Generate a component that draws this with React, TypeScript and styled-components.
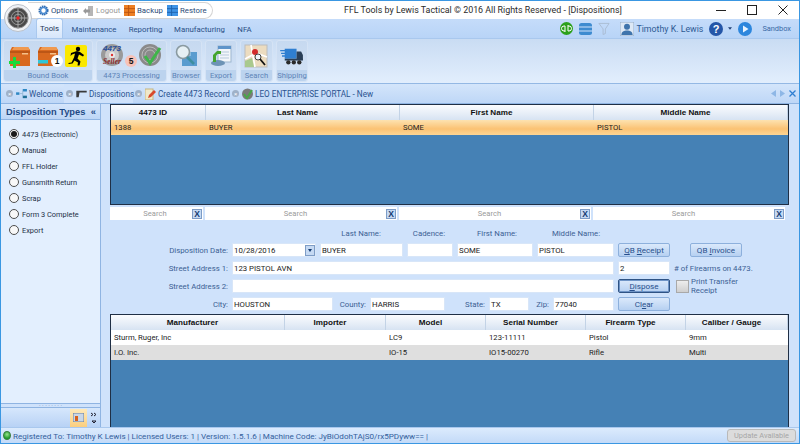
import React from "react";
import styled, { createGlobalStyle } from "styled-components";

const Global = createGlobalStyle`
  html, body { margin: 0; padding: 0; background: #cfe2fb; }
  * { box-sizing: border-box; }
  svg { flex: none; display: block; }
`;

const Win = styled.div`
  position: relative;
  width: 800px;
  height: 444px;
  overflow: hidden;
  display: flex;
  flex-direction: column;
  font-family: Roboto, "Liberation Sans", Arial, sans-serif;
  font-size: 7.8px;
  color: #15283f;
  background: #cfe2fb;
  border: 1px solid #3a97e2;
`;

const TitleBar = styled.div`
  height: 18px;
  flex: none;
  background: #fff;
  display: flex;
  align-items: center;
  padding-left: 27px;
`;
const Quick = styled.div`
  height: 17px;
  width: 185px;
  margin-top: 1px;
  flex: none;
  border: 1px solid #d4d4d4;
  border-left: none;
  border-radius: 0 9px 9px 0;
  display: flex;
  align-items: center;
  padding-left: 10px;
`;
const QuickItem = styled.span<{ $off?: boolean; $w: number }>`
  display: inline-flex;
  align-items: center;
  gap: 2px;
  width: ${(p) => p.$w}px;
  flex: none;
  font-size: 7.8px;
  white-space: nowrap;
  color: ${(p) => (p.$off ? "#9a9a9a" : "#2c4a78")};
`;
const Title = styled.div`
  margin-left: 131px;
  font-size: 8.9px;
  color: #2b2b2b;
  white-space: nowrap;
`;
const WinBtns = styled.div`
  margin-left: auto;
  display: flex;
  align-items: center;
  gap: 21px;
  padding-right: 11px;
`;
const LogoWrap = styled.div`
  position: absolute;
  left: 3px;
  top: 3px;
  z-index: 5;
`;

const Tabs = styled.div`
  height: 20px;
  flex: none;
  background: linear-gradient(#c5dcfa, #b8d4f7);
  display: flex;
  align-items: flex-end;
  padding-left: 35px;
  border-bottom: 1px solid #a9c8ee;
`;
const Tab = styled.div<{ $on?: boolean; $w: number }>`
  width: ${(p) => p.$w}px;
  height: ${(p) => (p.$on ? "20px" : "18px")};
  margin-right: 5px;
  display: flex;
  align-items: center;
  justify-content: center;
  font-size: 7.8px;
  color: ${(p) => (p.$on ? "#1d3554" : "#2a4f86")};
  background: ${(p) => (p.$on ? "linear-gradient(#f4f9ff, #d6e6fb)" : "none")};
  border: ${(p) => (p.$on ? "1px solid #a9c8ee" : "none")};
  border-bottom: none;
  border-radius: 3px 3px 0 0;
`;
const TabRight = styled.div`
  margin-left: auto;
  height: 19px;
  display: flex;
  align-items: center;
  padding-right: 8px;
  color: #2a4f86;
`;
const Spacer = styled.span<{ $w: number }>`
  width: ${(p) => p.$w}px;
  flex: none;
`;
const UserName = styled.span`
  font-size: 8.8px;
  color: #2f5a94;
  margin: 0 6px 0 2px;
  white-space: nowrap;
`;
const Sandbox = styled.span`
  margin-left: 10px;
  font-size: 7.4px;
  color: #3a6aa5;
`;

const Ribbon = styled.div`
  height: 45px;
  flex: none;
  background: linear-gradient(#c9dcf3, #e2eefd);
  border-bottom: 1px solid #94b8e4;
  padding: 1px 0 1px 2px;
  display: flex;
`;
const Group = styled.div<{ $w: number; $gap: number }>`
  width: ${(p) => p.$w}px;
  margin-right: ${(p) => p.$gap}px;
  height: 42px;
  border-radius: 3px;
  border: 1px solid #d5e3f5;
  background: linear-gradient(#c6d9f0, #d4e3f6);
  display: flex;
  flex-direction: column;
`;
const GroupIcons = styled.div<{ $pl: number }>`
  flex: 1;
  display: flex;
  align-items: center;
  padding-left: ${(p) => p.$pl}px;
`;
const GroupLabel = styled.div`
  height: 11px;
  line-height: 11px;
  text-align: center;
  font-size: 7.6px;
  color: #5d84b8;
  white-space: nowrap;
  background: #bcd3ee;
  border-radius: 0 0 3px 3px;
`;
const IconSlot = styled.div`
  position: relative;
  width: 24px;
  height: 24px;
  flex: none;
`;
const Badge = styled.span<{ $red?: boolean }>`
  position: absolute;
  right: ${(p) => (p.$red ? "-13px" : "-3px")};
  bottom: 1px;
  width: 12px;
  height: 12px;
  border-radius: 50%;
  font: bold 8.5px/12px "Liberation Sans", sans-serif;
  text-align: center;
  color: #111;
  background: ${(p) => (p.$red ? "#f7c2b8" : "#fff")};
`;

const DocTabs = styled.div`
  height: 20px;
  flex: none;
  background: linear-gradient(#d4e5fb, #bed7f7);
  border-bottom: 1px solid #8fb4e2;
  display: flex;
  align-items: center;
  padding-left: 5px;
`;
const DocTab = styled.div<{ $w: number; $on?: boolean; $pl: number }>`
  width: ${(p) => p.$w}px;
  height: 19px;
  flex: none;
  display: flex;
  align-items: center;
  gap: 2px;
  padding-left: ${(p) => p.$pl}px;
  color: #2a5390;
  font-size: 8.2px;
  white-space: nowrap;
  background: ${(p) => (p.$on ? "#cfe2fb" : "none")};
`;
const DocArrows = styled.div`
  margin-left: auto;
  display: flex;
  align-items: center;
  gap: 4px;
  padding-right: 3px;
`;
const Close = styled.span`
  width: 7px;
  height: 7px;
  margin-right: 1px;
  border-radius: 50%;
  background: #9fb1c8;
  color: #fff;
  font-size: 6px;
  line-height: 7px;
  text-align: center;
  flex: none;
`;

const Main = styled.div`
  flex: 1;
  display: flex;
  min-height: 0;
  overflow: hidden;
`;
const Side = styled.div`
  width: 100px;
  flex: none;
  display: flex;
  flex-direction: column;
  border-right: 1px solid #8fb4e2;
  background: #e3effe;
`;
const SideHead = styled.div`
  height: 16px;
  flex: none;
  background: linear-gradient(#d6e6fb, #bdd6f6);
  border-bottom: 1px solid #8fb4e2;
  display: flex;
  align-items: center;
  justify-content: space-between;
  padding: 0 4px 0 5px;
  font-family: "Liberation Sans", sans-serif;
  font-size: 9.3px;
  font-weight: bold;
  color: #1f4a85;
  white-space: nowrap;
`;
const RadioList = styled.div`
  flex: 1;
  display: flex;
  flex-direction: column;
  gap: 4px;
  padding: 8px 0 0 8px;
`;
const RadioRow = styled.div`
  height: 12px;
  display: flex;
  align-items: center;
  gap: 3px;
  color: #1d2f46;
  font-size: 7.4px;
  white-space: nowrap;
`;
const Radio = styled.span<{ $on?: boolean }>`
  width: 10px;
  height: 10px;
  border-radius: 50%;
  border: 1px solid #4d4d4d;
  background: #f8f8f8;
  display: flex;
  align-items: center;
  justify-content: center;
  &::after {
    content: "";
    width: 6px;
    height: 6px;
    border-radius: 50%;
    background: ${(p) => (p.$on ? "#1a1a1a" : "transparent")};
  }
`;
const Grip = styled.div`
  height: 5px;
  flex: none;
  border-top: 1px solid #8fb4e2;
  border-bottom: 1px solid #8fb4e2;
  background: #cfe2fb;
  color: #5a7ba8;
  font-size: 6px;
  line-height: 2px;
  text-align: center;
`;
const SideFoot = styled.div`
  height: 19px;
  flex: none;
  background: linear-gradient(#d6e7fc, #b8d2f5);
  display: flex;
  align-items: center;
  justify-content: flex-end;
  padding-right: 3px;
  gap: 4px;
`;
const FootBtn = styled.div`
  width: 17px;
  height: 18px;
  background: linear-gradient(#fde9ba, #fbcf7f);
  display: flex;
  align-items: center;
  justify-content: center;
`;

const Content = styled.div`
  flex: 1;
  padding: 0 10px 0 9px;
  display: flex;
  flex-direction: column;
  min-width: 0;
`;
const Grid = styled.div<{ $h: number; $open?: boolean }>`
  height: ${(p) => p.$h}px;
  flex: none;
  background: #4581b5;
  border: 1px solid #1f2f45;
  border-bottom-width: ${(p) => (p.$open ? 0 : 1)}px;
  width: 679px;
`;
const HeadRow = styled.div<{ $cols: string }>`
  display: grid;
  grid-template-columns: ${(p) => p.$cols};
  height: 15px;
  background: linear-gradient(#fbfcfe, #d7e3f2);
`;
const HeadCell = styled.div`
  text-align: center;
  padding-right: 10px;
  font-family: "Liberation Sans", sans-serif;
  font-weight: bold;
  font-size: 8.1px;
  line-height: 15px;
  color: #111;
  border-right: 1px solid #c3d3e6;
`;
const Row = styled.div<{ $cols: string; $bg: string }>`
  display: grid;
  grid-template-columns: ${(p) => p.$cols};
  height: 15px;
  background: ${(p) => p.$bg};
`;
const Cell = styled.div`
  font-size: 7.7px;
  line-height: 15px;
  padding-left: 3px;
  color: #222;
  white-space: nowrap;
  overflow: hidden;
`;
const SearchRow = styled.div`
  display: grid;
  grid-template-columns: 93px 192px 192px 192px;
  gap: 2px;
  height: 15px;
  width: 679px;
  margin-top: 2px;
  flex: none;
`;
const SearchCell = styled.div<{ $pr: number }>`
  background: #fff;
  display: flex;
  align-items: center;
  position: relative;
  padding-right: ${(p) => p.$pr}px;
  height: 13px;
`;
const SearchText = styled.span`
  flex: 1;
  text-align: center;
  color: #9a9a9a;
  font-size: 7.6px;
`;
const XBtn = styled.span`
  position: absolute;
  right: 1px;
  top: 2px;
  width: 10px;
  height: 10px;
  background: #c5d9f3;
  border: 1px solid #7d9cc6;
  color: #123a70;
  font: bold 8.5px/8px "Liberation Sans", sans-serif;
  text-align: center;
`;

const Form = styled.div`
  height: 92px;
  flex: none;
  padding-top: 6px;
  display: flex;
  flex-direction: column;
  gap: 4px;
`;
const LabelRow = styled.div`
  display: flex;
  height: 11px;
  flex: none;
`;
const TopLabel = styled.div<{ $w: number; $ml: number }>`
  width: ${(p) => p.$w}px;
  margin-left: ${(p) => p.$ml}px;
  text-align: center;
  color: #3c5f94;
  font-size: 7.8px;
  line-height: 11px;
  white-space: nowrap;
`;
const FormRow = styled.div`
  display: flex;
  align-items: center;
  gap: 4px;
  height: 14px;
  flex: none;
`;
const Label = styled.div<{ $w: number; $left?: boolean }>`
  width: ${(p) => p.$w}px;
  flex: none;
  text-align: ${(p) => (p.$left ? "left" : "right")};
  color: #3c5f94;
  font-size: 7.8px;
  white-space: nowrap;
`;
const Input = styled.div<{ $w: number }>`
  width: ${(p) => p.$w}px;
  height: 14px;
  flex: none;
  background: #fff;
  border: 1px solid #d8e6f8;
  color: #222;
  font-size: 7.8px;
  padding-left: 1px;
  display: flex;
  align-items: center;
  justify-content: space-between;
`;
const Spin = styled.span`
  width: 10px;
  height: 11px;
  background: #c5d9f3;
  border: 1px solid #7d9cc6;
  display: flex;
  align-items: center;
  justify-content: center;
  &::after {
    content: "";
    border: 2px solid transparent;
    border-top: 3px solid #123a70;
    border-bottom: 0;
  }
`;
const Btn = styled.div<{ $w: number; $focus?: boolean; $ml?: number }>`
  width: ${(p) => p.$w}px;
  height: 14px;
  flex: none;
  margin-left: ${(p) => p.$ml ?? 0}px;
  background: linear-gradient(#dbe9fb, #b6d0f1);
  border: ${(p) => (p.$focus ? "1px solid #2f5384" : "1px solid #8db0dc")};
  box-shadow: ${(p) => (p.$focus ? "inset 0 0 0 1px #6f94c6" : "none")};
  border-radius: 2px;
  text-align: center;
  color: #274f8c;
  font-size: 8.1px;
  line-height: 12px;
  white-space: nowrap;
`;
const Check = styled.span`
  width: 13px;
  height: 13px;
  flex: none;
  margin-left: 2px;
  background: linear-gradient(#ededed, #cfcfcf);
  border: 1px solid #a9a9a9;
`;
const CheckLabel = styled.div`
  color: #3c5f94;
  font-size: 7.8px;
  line-height: 9px;
  margin-left: -2px;
  width: 62px;
`;

const Status = styled.div`
  height: 16px;
  flex: none;
  background: linear-gradient(#dcebfd, #c3daf8);
  border-top: 1px solid #a9c8ee;
  display: flex;
  align-items: center;
  padding-left: 2px;
  gap: 2px;
  color: #33609c;
  font-size: 8.1px;
  white-space: nowrap;
`;
const Led = styled.span`
  width: 8px;
  height: 9px;
  border-radius: 50%;
  background: radial-gradient(circle at 50% 35%, #9be38f, #1f9a2c 70%);
  border: 1px solid #3b7f3f;
  flex: none;
`;
const Update = styled.div`
  margin-left: auto;
  margin-right: 3px;
  width: 69px;
  height: 13px;
  border: 1px solid #b9b9b9;
  border-radius: 3px;
  background: #dcdcdc;
  color: #a6a6a6;
  font-size: 7.4px;
  line-height: 11px;
  text-align: center;
`;

const Logo = () => (
  <svg width="28" height="28" viewBox="0 0 29 29">
    <circle cx="14.5" cy="14.5" r="14" fill="#eef1f5" stroke="#b9bfc8" />
    <circle cx="14.5" cy="14.5" r="10.5" fill="#4a4a4a" stroke="#8d8d8d" />
    <circle cx="14.5" cy="14.5" r="7" fill="none" stroke="#aaa" strokeWidth="0.8" />
    <circle cx="14.5" cy="14.5" r="4" fill="none" stroke="#aaa" strokeWidth="0.8" />
    <path d="M14.5 4v21M4 14.5h21" stroke="#bbb" strokeWidth="0.8" />
    <circle cx="14.5" cy="14.5" r="1.8" fill="#e22" />
  </svg>
);
const Gear = () => (
  <svg width="11" height="11" viewBox="0 0 12 12">
    <circle cx="6" cy="6" r="4.2" fill="none" stroke="#2f6bb0" strokeWidth="2.6" strokeDasharray="1.6 0.6" />
    <circle cx="6" cy="6" r="3.2" fill="none" stroke="#4b8bd0" strokeWidth="1.6" />
  </svg>
);
const LogoutIcon = () => (
  <svg width="11" height="12" viewBox="0 0 11 12">
    <rect x="5" y="1" width="5" height="10" fill="#b5b5b5" />
    <path d="M0 6l3-3v1.6h4v2.8H3V9z" fill="#999" />
  </svg>
);
const Stack = ({ c, d }: { c: string; d: string }) => (
  <svg width="11" height="11" viewBox="0 0 12 12">
    <rect width="12" height="12" fill={c} />
    <path d="M0 4h12M0 8h12M5 0v12" stroke={d} strokeWidth="1" />
  </svg>
);
const Book = ({ mark }: { mark?: string }) => (
  <svg width="24" height="24" viewBox="0 0 24 24">
    <path d="M4 3h16l2 3v16H2V7z" fill="#d9691f" />
    <path d="M2 7h20v2H2z" fill="#a84a10" opacity=".6" />
    <path d="M6 3h14l2 3H4z" fill="#f0994f" />
    <path d="M14 9h6v1.5h-6z" fill="#f5c189" />
    {mark === "plus" && <path d="M5 13h3v4h4v3H8v4H5v-4H1v-3h4z" fill="#19d93a" />}
    {mark === "minus" && <rect x="2" y="16" width="10" height="3.5" fill="#2fc6d8" />}
  </svg>
);
const Runner = () => (
  <svg width="22" height="22" viewBox="0 0 22 22">
    <rect width="22" height="22" rx="2" fill="#fbe800" />
    <circle cx="13" cy="4" r="2.2" fill="#000" />
    <path d="M6 8l6-2 3 1 4 3-1 1.5-4-2-1.5 4 3 3-1 4h-2l.5-3-3.5-2-2 3-4 .5V18l3-.5 2.5-5 1-4-3 1-1.5 1.5z" fill="#000" />
  </svg>
);
const Seller = () => (
  <svg width="24" height="24" viewBox="0 0 24 24">
    <circle cx="12" cy="11" r="11" fill="#9a9a9a" />
    <circle cx="12" cy="11" r="7" fill="#c9c9c9" />
    <circle cx="12" cy="11" r="3" fill="#e9e9e9" />
    <circle cx="12" cy="11" r="1.2" fill="#d33" />
    <text x="12" y="7" textAnchor="middle" fontFamily="Liberation Sans" fontSize="8" fontStyle="italic" fontWeight="bold" fill="#2a4f9a">4473</text>
    <text x="12" y="20" textAnchor="middle" fontFamily="Liberation Serif" fontSize="7.5" fontStyle="italic" fontWeight="bold" fill="#8b2a2a">Seller</text>
  </svg>
);
const TargetCheck = () => (
  <svg width="24" height="24" viewBox="0 0 24 24">
    <circle cx="11" cy="11" r="11" fill="#8a8a8a" />
    <circle cx="11" cy="11" r="8" fill="none" stroke="#bbb" />
    <circle cx="11" cy="11" r="5" fill="none" stroke="#bbb" />
    <path d="M6 12l5 7L21 4" fill="none" stroke="#3fb54a" strokeWidth="3" />
  </svg>
);
const Browser = () => (
  <svg width="24" height="24" viewBox="0 0 24 24">
    <path d="M8 8h15v14H8z" fill="#5a9ccf" />
    <path d="M8 8h9v4H8z" fill="#8bbfe4" />
    <circle cx="9" cy="8" r="6.5" fill="#e6f0f4" stroke="#8a9aa0" strokeWidth="1.6" />
    <path d="M13 13l7 7" stroke="#3e8fa0" strokeWidth="2.6" />
  </svg>
);
const ExportIcon = () => (
  <svg width="24" height="24" viewBox="0 0 24 24">
    <rect x="9" y="2" width="13" height="16" fill="#f2f6fa" stroke="#9db6cf" />
    <rect x="9" y="2" width="13" height="3" fill="#5f94c9" />
    <path d="M11 8h9M11 11h9M11 14h9" stroke="#b7c9dc" />
    <ellipse cx="9" cy="19" rx="7" ry="3" fill="#6d93b5" />
    <path d="M4 18v-7l4-4h4v3H8.5L7 12v6z" fill="#45a52f" />
  </svg>
);
const MapIcon = () => (
  <svg width="24" height="24" viewBox="0 0 24 24">
    <rect x="1" y="1" width="22" height="22" fill="#ecdcc0" stroke="#bcbcbc" />
    <path d="M1 15L12 9l11 4M7 1l4 22" stroke="#fff" strokeWidth="1.6" fill="none" />
    <path d="M1 17l7-3 2 9H1z" fill="#a9c98e" />
    <circle cx="11" cy="8" r="3" fill="#d22b2b" />
    <circle cx="14" cy="13" r="3" fill="#eef5fa" stroke="#444" />
    <path d="M16 15l5 6" stroke="#111" strokeWidth="1.8" />
  </svg>
);
const Truck = () => (
  <svg width="24" height="20" viewBox="0 0 26 22">
    <path d="M5 3h13v11H5z" fill="#2f7fd1" />
    <path d="M0 5h7M1 8h6M2 11h5" stroke="#2f7fd1" strokeWidth="1.4" />
    <path d="M18 6h5l2 4v5H18z" fill="#2a3f57" />
    <rect x="5" y="14" width="20" height="2" fill="#2a3f57" />
    <circle cx="9" cy="18" r="2.4" fill="#2a2a2a" />
    <circle cx="15" cy="18" r="2.4" fill="#2a2a2a" />
    <circle cx="21" cy="18" r="2.4" fill="#2a2a2a" />
  </svg>
);
const QB = () => (
  <svg width="13" height="13" viewBox="0 0 13 13">
    <circle cx="6.5" cy="6.5" r="6.5" fill="#2ca01c" />
    <path d="M5 4v6M5 4H4a2 2 0 0 0 0 5h1M8 9V3M8 4h1a2 2 0 0 1 0 5H8" stroke="#fff" strokeWidth="1" fill="none" />
  </svg>
);
const Db = () => (
  <svg width="13" height="12" viewBox="0 0 13 12">
    <rect width="13" height="12" rx="2.5" fill="#3e8bd0" />
    <path d="M0 4h13M0 8h13" stroke="#cfe2fb" />
  </svg>
);
const Funnel = () => (
  <svg width="12" height="13" viewBox="0 0 13 13">
    <path d="M1 1h11L8 7v5L5.5 13V7z" fill="none" stroke="#a9bcd2" />
  </svg>
);
const Person = () => (
  <svg width="14" height="14" viewBox="0 0 15 15">
    <rect width="15" height="15" fill="#dde8f5" stroke="#8ea7c6" />
    <circle cx="7.5" cy="5" r="3.2" fill="#3f74ac" />
    <path d="M1.5 14c0-4 3-5 6-5s6 1 6 5z" fill="#3f74ac" />
  </svg>
);
const Help = () => (
  <svg width="14" height="14" viewBox="0 0 14 14">
    <circle cx="7" cy="7" r="7" fill="#2456a8" />
    <text x="7" y="11" textAnchor="middle" fontFamily="Liberation Sans" fontSize="11" fontWeight="bold" fill="#fff">?</text>
  </svg>
);
const Play = () => (
  <svg width="14" height="14" viewBox="0 0 14 14">
    <circle cx="7" cy="7" r="7" fill="#2c86dd" />
    <path d="M5 3.5l5.5 3.5L5 10.5z" fill="#e8f3ff" />
  </svg>
);
const Caret = () => (
  <svg width="4" height="3" viewBox="0 0 5 3">
    <path d="M0 0h5L2.5 3z" fill="#1f3f75" />
  </svg>
);
const Welcome = () => (
  <svg width="11" height="10" viewBox="0 0 13 12">
    <rect x="0" y="4" width="4" height="3" fill="#2f88c4" />
    <rect x="8" y="0" width="5" height="3" fill="#2f88c4" />
    <rect x="8" y="8" width="5" height="3" fill="#1f6f96" />
    <path d="M4 5.5h4M8 2v7" stroke="#8fb4d2" />
  </svg>
);
const Gun = () => (
  <svg width="11" height="8" viewBox="0 0 13 10">
    <path d="M0 1h13v2H4L3 9H0z" fill="#3a3a3a" />
  </svg>
);
const Pencil = () => (
  <svg width="11" height="12" viewBox="0 0 11 12">
    <rect x="0" y="1" width="8" height="11" fill="#f0e8c9" stroke="#c6b580" />
    <path d="M3 10l1-3 5-5 2 2-5 5z" fill="#d8492a" />
  </svg>
);
const Leo = () => (
  <svg width="11" height="12" viewBox="0 0 11 12">
    <circle cx="5.5" cy="6" r="5.5" fill="#7a7a7a" />
    <path d="M2 6l3 4 5-8" stroke="#4aa64a" strokeWidth="2" fill="none" />
  </svg>
);

const Minimize = () => (
  <svg width="10" height="10" viewBox="0 0 10 10"><path d="M0 5.5h10" stroke="#222" /></svg>
);
const Maximize = () => (
  <svg width="10" height="10" viewBox="0 0 10 10"><rect x=".5" y=".5" width="9" height="9" fill="none" stroke="#222" /></svg>
);
const CloseX = () => (
  <svg width="10" height="10" viewBox="0 0 10 10"><path d="M.5.5l9 9M9.5.5l-9 9" stroke="#222" /></svg>
);
const Arrows = () => (
  <>
    <svg width="5" height="7" viewBox="0 0 5 7"><path d="M5 0v7L0 3.5z" fill="#8eb7e6" /></svg>
    <svg width="5" height="7" viewBox="0 0 5 7"><path d="M0 0v7l5-3.5z" fill="#8eb7e6" /></svg>
    <svg width="7" height="7" viewBox="0 0 7 7"><path d="M.5.5l6 6M6.5.5l-6 6" stroke="#2f7fd1" strokeWidth="1.3" /></svg>
  </>
);
const MiniBook = () => (
  <svg width="11" height="9" viewBox="0 0 11 9">
    <rect width="11" height="9" fill="#c9d7e8" stroke="#6b7f99" />
    <rect x="2" y="3" width="3" height="5" fill="#d8611d" />
  </svg>
);

const topCols = "95px 194px 194px 194px";
const botCols = "174px 101px 100px 100px 100px 102px";

export default function App() {
  return (
    <Win>
      <Global />
      <LogoWrap><Logo /></LogoWrap>
      <TitleBar>
        <Quick>
          <QuickItem $w={45}><Gear />Options</QuickItem>
          <QuickItem $off $w={41}><LogoutIcon />Logout</QuickItem>
          <QuickItem $w={43}><Stack c="#ee7f22" d="#b95310" />Backup</QuickItem>
          <QuickItem $w={40}><Stack c="#3f94e6" d="#1e62ad" />Restore</QuickItem>
        </Quick>
        <Title>FFL Tools by Lewis Tactical © 2016 All Rights Reserved - [Dispositions]</Title>
        <WinBtns><Minimize /><Maximize /><CloseX /></WinBtns>
      </TitleBar>
      <Tabs>
        <Tab $on $w={27}>Tools</Tab>
        <Tab $w={52}>Maintenance</Tab>
        <Tab $w={41}>Reporting</Tab>
        <Tab $w={57}>Manufacturing</Tab>
        <Tab $w={23}>NFA</Tab>
        <TabRight>
          <QB />
          <Spacer $w={6} />
          <Db />
          <Spacer $w={6} />
          <Funnel />
          <Spacer $w={10} />
          <Person />
          <UserName>Timothy K. Lewis</UserName>
          <Help />
          <Spacer $w={5} />
          <Caret />
          <Spacer $w={6} />
          <Play />
          <Sandbox>Sandbox</Sandbox>
        </TabRight>
      </Tabs>
      <Ribbon>
        <Group $w={90} $gap={3}>
          <GroupIcons $pl={4}>
            <IconSlot><Book mark="plus" /></IconSlot>
            <Spacer $w={4} />
            <IconSlot><Book mark="minus" /><Badge>1</Badge></IconSlot>
            <Spacer $w={5} />
            <Runner />
          </GroupIcons>
          <GroupLabel>Bound Book</GroupLabel>
        </Group>
        <Group $w={71} $gap={3}>
          <GroupIcons $pl={3}>
            <IconSlot><Seller /><Badge $red>5</Badge></IconSlot>
            <Spacer $w={15} />
            <IconSlot><TargetCheck /></IconSlot>
          </GroupIcons>
          <GroupLabel>4473 Processing</GroupLabel>
        </Group>
        <Group $w={32} $gap={3}>
          <GroupIcons $pl={3}><IconSlot><Browser /></IconSlot></GroupIcons>
          <GroupLabel>Browser</GroupLabel>
        </Group>
        <Group $w={32} $gap={3}>
          <GroupIcons $pl={3}><IconSlot><ExportIcon /></IconSlot></GroupIcons>
          <GroupLabel>Export</GroupLabel>
        </Group>
        <Group $w={33} $gap={3}>
          <GroupIcons $pl={3}><IconSlot><MapIcon /></IconSlot></GroupIcons>
          <GroupLabel>Search</GroupLabel>
        </Group>
        <Group $w={32} $gap={0}>
          <GroupIcons $pl={3}><Truck /></GroupIcons>
          <GroupLabel>Shipping</GroupLabel>
        </Group>
      </Ribbon>
      <DocTabs>
        <DocTab $w={58} $pl={0}><Close>×</Close><Welcome />Welcome</DocTab>
        <DocTab $w={69} $pl={2} $on><Close>×</Close><Gun />Dispositions</DocTab>
        <DocTab $w={98} $pl={2}><Close>×</Close><Pencil />Create 4473 Record</DocTab>
        <DocTab $w={150} $pl={1}><Close>×</Close><Leo />LEO ENTERPRISE PORTAL - New</DocTab>
        <DocArrows><Arrows /></DocArrows>
      </DocTabs>
      <Main>
        <Side>
          <SideHead>Disposition Types<span>«</span></SideHead>
          <RadioList>
            {["4473 (Electronic)", "Manual", "FFL Holder", "Gunsmith Return", "Scrap", "Form 3 Complete", "Export"].map((t, i) => (
              <RadioRow key={t}><Radio $on={i === 0} />{t}</RadioRow>
            ))}
          </RadioList>
          <Grip>· · · · · · · ·</Grip>
          <SideFoot>
            <FootBtn><MiniBook /></FootBtn>
            <svg width="6" height="12" viewBox="0 0 6 12"><path d="M0 1l2 1.5L0 4M3 1l2 1.5L3 4M1 9h4L3 11z" fill="none" stroke="#223" /></svg>
          </SideFoot>
        </Side>
        <Content>
          <Grid $h={101}>
            <HeadRow $cols={topCols}>
              {["4473 ID", "Last Name", "First Name", "Middle Name"].map((h) => <HeadCell key={h}>{h}</HeadCell>)}
            </HeadRow>
            <Row $cols={topCols} $bg="linear-gradient(#fde2b0, #fbc273 60%, #fdd594)">
              {["1388", "BUYER", "SOME", "PISTOL"].map((c) => <Cell key={c}>{c}</Cell>)}
            </Row>
          </Grid>
          <SearchRow>
            {[3, 11, 11, 11].map((pr, i) => (
              <SearchCell key={i} $pr={pr}><SearchText>Search</SearchText><XBtn>X</XBtn></SearchCell>
            ))}
          </SearchRow>
          <Form>
            <LabelRow>
              <TopLabel $ml={226} $w={50}>Last Name:</TopLabel>
              <TopLabel $ml={25} $w={36}>Cadence:</TopLabel>
              <TopLabel $ml={25} $w={50}>First Name:</TopLabel>
              <TopLabel $ml={29} $w={50}>Middle Name:</TopLabel>
            </LabelRow>
            <FormRow>
              <Label $w={118}>Disposition Date:</Label>
              <Input $w={84}>10/28/2016<Spin /></Input>
              <Input $w={83}>BUYER</Input>
              <Input $w={46} />
              <Input $w={76}>SOME</Input>
              <Input $w={77}>PISTOL</Input>
              <Btn $w={52}><u>Q</u>B <u>R</u>eceipt</Btn>
              <Btn $w={52} $ml={16}>QB <u>I</u>nvoice</Btn>
            </FormRow>
            <FormRow>
              <Label $w={118}>Street Address 1:</Label>
              <Input $w={382}>123 PISTOL AVN</Input>
              <Input $w={52}>2</Input>
              <Label $w={85} $left># of Firearms on 4473.</Label>
            </FormRow>
            <FormRow>
              <Label $w={118}>Street Address 2:</Label>
              <Input $w={382} />
              <Btn $w={52} $focus><u>D</u>ispose</Btn>
              <Check />
              <CheckLabel>Print Transfer Receipt</CheckLabel>
            </FormRow>
            <FormRow>
              <Label $w={118}>City:</Label>
              <Input $w={101}>HOUSTON</Input>
              <Label $w={29}>County:</Label>
              <Input $w={75}>HARRIS</Input>
              <Label $w={36}>State:</Label>
              <Input $w={40}>TX</Input>
              <Label $w={16}>Zip:</Label>
              <Input $w={61}>77040</Input>
              <Btn $w={52}>Cl<u>e</u>ar</Btn>
            </FormRow>
          </Form>
          <Grid $h={115} $open>
            <HeadRow $cols={botCols}>
              {["Manufacturer", "Importer", "Model", "Serial Number", "Firearm Type", "Caliber / Gauge"].map((h) => <HeadCell key={h}>{h}</HeadCell>)}
            </HeadRow>
            <Row $cols={botCols} $bg="#fff">
              {["Sturm, Ruger, Inc", "", "LC9", "123-11111", "Pistol", "9mm"].map((c, i) => <Cell key={i}>{c}</Cell>)}
            </Row>
            <Row $cols={botCols} $bg="#dfdfdf">
              {["I.O. Inc.", "", "IO-15", "IO15-00270", "Rifle", "Multi"].map((c, i) => <Cell key={i}>{c}</Cell>)}
            </Row>
          </Grid>
        </Content>
      </Main>
      <Status>
        <Led />
        Registered To: Timothy K Lewis | Licensed Users: 1 | Version: 1.5.1.6 | Machine Code: JyBiOdohTAjS0/rx5PDyww== |
        <Update>Update Available</Update>
      </Status>
    </Win>
  );
}
